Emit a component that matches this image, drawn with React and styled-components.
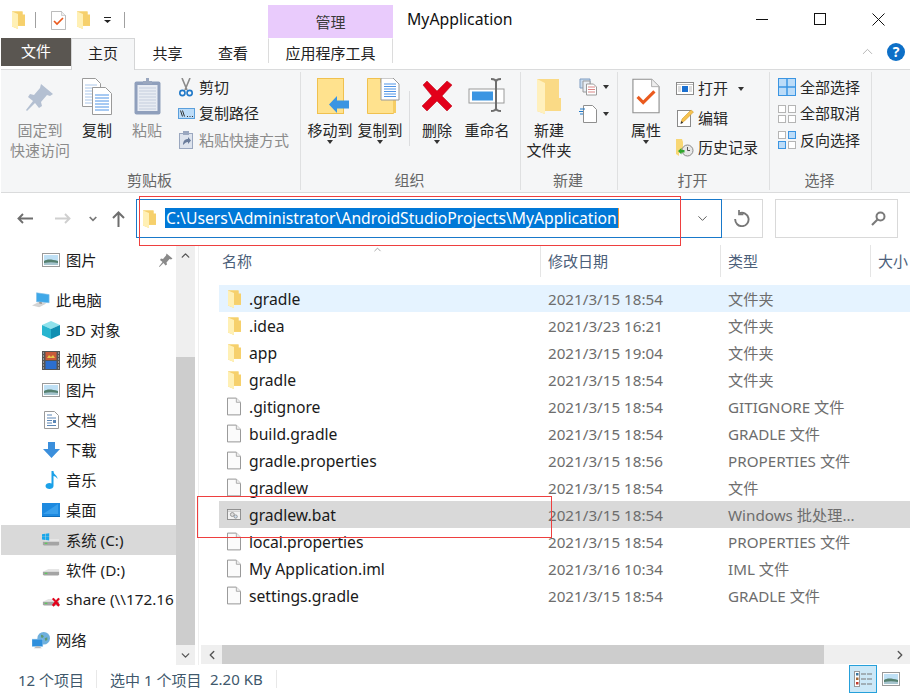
import React from "react";
import styled, { createGlobalStyle } from "styled-components";
import { ChevronDown, ChevronUp, ChevronLeft, ChevronRight } from "lucide-react";

const GlobalStyle = createGlobalStyle`
  html, body {
    margin: 0;
    padding: 0;
    background: #fff;
  }
  body {
    font-family: "Noto Sans", "Noto Sans CJK SC", sans-serif;
    font-size: 15px;
    color: #1c1c1c;
  }
  * {
    box-sizing: border-box;
  }
`;

const Window = styled.div`
  position: relative;
  width: 910px;
  height: 695px;
  padding-left: 1px;
  overflow: hidden;
  background: #fff;
  display: flex;
  flex-direction: column;
`;

const RedBox = styled.div`
  position: absolute;
  left: ${(p) => p.$x}px;
  top: ${(p) => p.$y}px;
  width: ${(p) => p.$w}px;
  height: ${(p) => p.$h}px;
  border: 1px solid #ee3f3f;
  pointer-events: none;
`;

/* title bar */
const TitleBar = styled.div`
  height: 38px;
  display: flex;
  flex: none;
`;

const QuickBar = styled.div`
  width: 267px;
  display: flex;
  align-items: center;
  padding: 2px 0 0 11px;
`;

const QuickSep = styled.div`
  width: 1px;
  height: 16px;
  background: #a0a0a0;
  margin: 0 ${(p) => p.$right || 0}px 0 ${(p) => p.$left || 0}px;
`;

const QuickIcon = styled.div`
  display: flex;
  margin-right: ${(p) => p.$right || 0}px;
`;

const ContextTab = styled.div`
  width: 125px;
  margin-top: 5px;
  background: #e9cbfc;
  color: #3a3a3a;
  text-align: center;
  line-height: 34px;
`;

const Title = styled.div`
  flex: 1;
  padding-left: 14px;
  line-height: 38px;
  font-size: 15.8px;
  color: #111;
`;

const WinButtons = styled.div`
  display: flex;
  padding-right: 3px;
`;

const WinButton = styled.div`
  width: 58px;
  display: flex;
  align-items: center;
  justify-content: center;
  color: #111;
`;

const MinGlyph = styled.div`
  width: 12px;
  height: 1px;
  background: #111;
`;

const MaxGlyph = styled.div`
  width: 12px;
  height: 12px;
  border: 1px solid #111;
`;

/* tabs */
const TabRow = styled.div`
  height: 32px;
  flex: none;
  display: flex;
  border-bottom: 1px solid #dadbdc;
`;

const FileTab = styled.div`
  width: 70px;
  height: 28px;
  background: #5a5651;
  color: #fff;
  text-align: center;
  line-height: 27px;
`;

const Tab = styled.div`
  width: ${(p) => p.$w}px;
  height: ${(p) => (p.$active ? 32 : 31)}px;
  text-align: center;
  line-height: 29px;
  color: #222;
  background: ${(p) => (p.$active ? "#f5f6f7" : "transparent")};
  border: 1px solid ${(p) => (p.$active ? "#d4d5d6" : "transparent")};
  border-bottom: none;
  position: relative;
`;

const ToolTab = styled(Tab)`
  margin-left: 2px;
  border-color: #dcdcdc;
  border-top-color: transparent;
  height: 25px;
`;

const TabRight = styled.div`
  flex: 1;
  display: flex;
  justify-content: flex-end;
  align-items: center;
  gap: 11px;
  padding: 0 5px 4px 0;
`;

const HelpIcon = styled.div`
  width: 18px;
  height: 18px;
  border-radius: 50%;
  background: #0d6fc7;
  color: #fff;
  font-size: 14px;
  font-weight: 700;
  line-height: 18px;
  text-align: center;
`;

/* ribbon */
const Ribbon = styled.div`
  height: 123px;
  flex: none;
  display: flex;
  padding-top: 2px;
  background: #f5f6f7;
  border-bottom: 1px solid #dadbdc;
`;

const Group = styled.div`
  width: ${(p) => p.$w}px;
  height: 118px;
  display: flex;
  flex-direction: column;
  border-right: 1px solid #dfe0e1;
`;

const GroupBody = styled.div`
  flex: 1;
  display: flex;
  align-items: flex-start;
  padding: 2px 0 0 ${(p) => p.$pad || 0}px;
`;

const GroupLabel = styled.div`
  height: 24px;
  padding-right: 2px;
  text-align: center;
  font-size: 15px;
  line-height: 28px;
  color: #666;
`;

const BigButton = styled.div`
  width: ${(p) => p.$w}px;
  padding: 4px 0 0 ${(p) => p.$pl || 0}px;
  display: flex;
  flex-direction: column;
  align-items: center;
  color: ${(p) => (p.$off ? "#8b8b8b" : "#262626")};
  font-size: 15px;
  line-height: 20px;
  white-space: nowrap;
  text-align: center;
`;

const BigIcon = styled.div`
  height: 42px;
  padding: ${(p) => p.$top || 0}px 0 0 ${(p) => p.$shift || 0}px;
  display: flex;
  align-items: flex-start;
  justify-content: center;
`;

const Caret = styled.div`
  width: 0;
  height: 0;
  border-left: 3.5px solid transparent;
  border-right: 3.5px solid transparent;
  border-top: 4px solid #333;
  margin: ${(p) => p.$m || "0"};
  flex: none;
`;

const RibbonSep = styled.div`
  width: 1px;
  height: 55px;
  margin: 17px 0 0 4px;
  background: #dcdddf;
`;

const SmallColumn = styled.div`
  display: flex;
  flex-direction: column;
  padding: ${(p) => p.$top || 0}px 0 0 ${(p) => p.$left || 0}px;
`;

const SmallRow = styled.div`
  height: ${(p) => p.$h || 26.5}px;
  display: flex;
  align-items: center;
  gap: 4px;
  font-size: 15px;
  white-space: nowrap;
  color: ${(p) => (p.$off ? "#8b8b8b" : "#262626")};
`;

const SmallIcon = styled.div`
  width: 18px;
  display: flex;
  justify-content: center;
`;

const SmallText = styled.span`
  margin-bottom: 2px;
`;

/* navigation */
const NavBar = styled.div`
  height: 52px;
  flex: none;
  display: flex;
  align-items: center;
  padding-bottom: 1px;
`;

const NavArrows = styled.div`
  width: 135px;
  display: flex;
  align-items: center;
  padding-left: 16px;
`;

const NavArrow = styled.div`
  display: flex;
  width: 16px;
  flex: none;
  justify-content: center;
  margin-left: ${(p) => p.$gap || 0}px;
`;

const AddressBox = styled.div`
  width: 586px;
  height: 39px;
  display: flex;
  align-items: center;
  border: 1px solid #1979ca;
  padding-left: 6px;
`;

const PathText = styled.div`
  margin: 0 0 2px 9px;
  padding: 0 1px;
  background: #0078d7;
  color: #fff;
  line-height: 20px;
  font-size: 15.7px;
  white-space: nowrap;
  border-right: 1px solid #f39a3c;
`;

const AddressChevron = styled.div`
  margin-left: auto;
  margin-right: 11px;
  display: flex;
  color: #444;
`;

const RefreshBox = styled.div`
  width: 41px;
  height: 39px;
  display: flex;
  align-items: center;
  justify-content: center;
  border: 1px solid #d9d9d9;
  border-left: none;
`;

const SearchBox = styled.div`
  width: 123px;
  height: 39px;
  margin-left: 12px;
  display: flex;
  align-items: center;
  justify-content: flex-end;
  padding-right: 11px;
  border: 1px solid #d9d9d9;
`;

/* main */
const Main = styled.div`
  flex: 1;
  display: flex;
  min-height: 0;
`;

const Sidebar = styled.div`
  width: 175px;
  flex: none;
  overflow: hidden;
`;

const TreeRow = styled.div`
  height: 30px;
  display: flex;
  align-items: center;
  gap: 6px;
  padding-left: ${(p) => p.$pad}px;
  margin-top: ${(p) => p.$gap || 0}px;
  background: ${(p) => (p.$selected ? "#d9d9d9" : "transparent")};
  font-size: 15.3px;
  color: #1c1c1c;
  white-space: nowrap;
  position: relative;
`;

const TreeIcon = styled.div`
  width: 18px;
  display: flex;
  justify-content: center;
  flex: none;
`;

const TreeText = styled.span`
  margin-bottom: 2px;
`;

const PinMark = styled.div`
  position: absolute;
  right: 3px;
  top: 8px;
  display: flex;
`;

const VScroll = styled.div`
  width: 19px;
  flex: none;
  display: flex;
  flex-direction: column;
  background: #efefef;
  color: #555;
`;

const ScrollButton = styled.div`
  height: 20px;
  display: flex;
  align-items: center;
  justify-content: center;
  flex: none;
`;

const VTrack = styled.div`
  flex: 1;
  padding: 92px 0 0;
  display: flex;
`;

const VThumb = styled.div`
  width: 100%;
  height: 100%;
  background: #cdcdcd;
`;

const Content = styled.div`
  flex: 1;
  min-width: 0;
  display: flex;
  flex-direction: column;
  margin-left: 3px;
  border-left: 1px solid #efefef;
`;

const HeaderRow = styled.div`
  height: 35px;
  flex: none;
  display: flex;
  padding-left: 15px;
`;

const HeaderCell = styled.div`
  width: ${(p) => p.$w}px;
  flex: none;
  height: 32px;
  padding-left: ${(p) => p.$pad || 7}px;
  line-height: 32px;
  font-size: 15px;
  color: #4c607a;
  white-space: nowrap;
  border-right: 1px solid #e5e5e5;
  position: relative;
`;

const SortMark = styled.div`
  position: absolute;
  left: 158px;
  top: -1px;
  display: flex;
  color: #777;
`;

const FileList = styled.div`
  flex: 1;
  padding: 5px 0 0 20px;
`;

const FileRow = styled.div`
  height: 27px;
  display: grid;
  grid-template-columns: 329px 180px 1fr;
  align-items: center;
  background: ${(p) => (p.$bg ? p.$bg : "transparent")};
  white-space: nowrap;
`;

const NameCell = styled.div`
  display: flex;
  align-items: center;
  gap: 8px;
  padding-left: 8px;
  font-size: 15.7px;
  color: #1a1a1a;
`;

const NameIcon = styled.div`
  width: 14px;
  display: flex;
  justify-content: center;
`;

const MetaCell = styled.div`
  font-size: 15.2px;
  color: #6d6d6d;
`;

const TypeCell = styled(MetaCell)`
  margin-bottom: 2px;
`;

const HScroll = styled.div`
  height: 19px;
  flex: none;
  margin: 0 0 1px 2px;
  display: flex;
  background: #efefef;
  color: #555;
`;

const HThumb = styled.div`
  width: 602px;
  background: #cdcdcd;
`;

const HButton = styled.div`
  width: ${(p) => p.$w}px;
  display: flex;
  align-items: center;
  justify-content: ${(p) => (p.$end ? "flex-end" : "center")};
  padding-right: ${(p) => (p.$end ? 3 : 0)}px;
`;

const StatusBar = styled.div`
  height: 30px;
  flex: none;
  display: flex;
  align-items: center;
  font-size: 15px;
  color: #40586c;
  padding: 0 0 2px 17px;
`;

const StatusSep = styled.div`
  width: 1px;
  height: 18px;
  background: #e8e8e8;
  margin: 0 ${(p) => p.$r || 0}px 0 ${(p) => p.$l || 0}px;
`;

const StatusText = styled.div`
  width: ${(p) => p.$w}px;
  white-space: nowrap;
`;

const ViewButtons = styled.div`
  margin-left: auto;
  padding-right: 10px;
  display: flex;
  align-items: center;
  gap: 5px;
`;

const ViewButton = styled.div`
  width: 28px;
  height: 28px;
  display: flex;
  align-items: center;
  justify-content: center;
  background: ${(p) => (p.$on ? "#cce8f7" : "transparent")};
  border: ${(p) => (p.$on ? "1px solid #26a0da" : "none")};
`;

/* drawings */
const Folder = ({ w = 13, h = 18 }) => (
  <svg width={w} height={h} viewBox="0 0 13 18">
    <path d="M0 0.5h10.5V4H13v11H6v3L0 15.500z" fill="#f8d775" />
    <path d="M0 .5h10.5v3h2.500v11H6z" fill="#f6d06c" />
    <path d="M0 .5L6 3v15L0 15.500z" fill="#fff0b5" />
  </svg>
);

const FileIcon = () => (
  <svg width="15" height="19" viewBox="0 0 15 19">
    <path d="M.5.5h9.500l4.500 4.500v13.500H.5z" fill="#fbfbfb" stroke="#8e8e8e" />
    <path d="M10 .5V5h4.500" fill="#eee" stroke="#aaa" />
  </svg>
);

const BatIcon = () => (
  <svg width="17" height="13" viewBox="0 0 17 13">
    <rect x=".5" y=".5" width="16" height="12" fill="#f2f2f2" stroke="#7f7f7f" />
    <path d="M1 2.500h15" stroke="#bbb" />
    <circle cx="6.500" cy="6.500" r="2.400" fill="#ddd" stroke="#8a8a8a" />
    <circle cx="10.500" cy="9" r="2" fill="#cfe0ef" stroke="#8a8a8a" />
  </svg>
);

const CheckDoc = ({ w = 15, h = 19, stroke = 1 }) => (
  <svg width={w} height={h} viewBox="0 0 30 38">
    <path d="M1 1h20l8 8v28H1z" fill="#fff" stroke="#8f8f8f" strokeWidth={stroke * 1.2} />
    <path d="M21 1v8h8" fill="#eee" stroke="#aaa" strokeWidth={stroke} />
    <path d="M6 20l6 6 12-12" fill="none" stroke="#ea5a1e" strokeWidth="3.400" />
  </svg>
);

const Pin = () => (
  <svg width="28" height="28" viewBox="0 0 28 28">
    <path d="M15 1l12 10-3 2-3-1-6 7 1 4-3 2-4-5-8 8-1-1 7-9-5-4 2-3 4 1 6-7z" fill="#b4c0d2" />
  </svg>
);

const SmallPin = () => (
  <svg width="14" height="14" viewBox="0 0 28 28">
    <path d="M15 1l12 10-3 2-3-1-6 7 1 4-3 2-4-5-8 8-1-1 7-9-5-4 2-3 4 1 6-7z" fill="#8a8a8a" />
  </svg>
);

const DocLines = ({ x, y, w, n, c = "#4f94e6", gap = 3 }) =>
  Array.from({ length: n }, (_, i) => (
    <path key={i} d={`M${x} ${y + i * gap}h${w}`} stroke={c} strokeWidth="1" />
  ));

const CopyIcon = () => (
  <svg width="30" height="37" viewBox="0 0 30 37">
    <path d="M.5.5h13l5 5v23H.5z" fill="#fff" stroke="#9a9a9a" />
    <DocLines x={3} y={7} w={12} n={7} c="#a9c6ea" />
    <path d="M10.500 9.500h13l6 6v21h-19z" fill="#fff" stroke="#9a9a9a" />
    <DocLines x={13} y={17} w={14} n={6} />
  </svg>
);

const PasteIcon = () => (
  <svg width="27" height="37" viewBox="0 0 27 37">
    <rect x=".5" y="3.500" width="26" height="33" rx="2" fill="#8f9fbc" />
    <rect x="3.500" y="7" width="20" height="26" fill="#e8ecf3" />
    <DocLines x={5} y={10} w={17} n={8} c="#c4cddd" />
    <path d="M9 6V3h3V0h3v3h3v3z" fill="#9aa7bf" />
  </svg>
);

const Scissors = () => (
  <svg width="14" height="19" viewBox="0 0 14 19">
    <path d="M3 0l5 12M11 0L6 12" stroke="#8b8b8b" strokeWidth="1.600" fill="none" />
    <circle cx="3.400" cy="15" r="2.600" fill="none" stroke="#1f78c8" strokeWidth="1.600" />
    <circle cx="10.600" cy="15" r="2.600" fill="none" stroke="#1f78c8" strokeWidth="1.600" />
  </svg>
);

const PathIcon = () => (
  <svg width="17" height="11" viewBox="0 0 17 11">
    <rect x=".5" y=".5" width="16" height="10" fill="#bcdcf8" stroke="#5a9fdc" />
    <path d="M2.500 2.500l2 6M4.500 2.500l2 6" stroke="#333" fill="none" />
    <path d="M9 8.500h1M11.500 8.500h1M14 8.500h1" stroke="#333" />
  </svg>
);

const ShortcutIcon = () => (
  <svg width="14" height="18" viewBox="0 0 14 18">
    <rect x=".5" y="2.500" width="13" height="15" fill="#dde3ed" stroke="#9aa7bf" />
    <rect x="4" y="0" width="6" height="4" fill="#9aa7bf" />
    <path d="M4 14c0-4 2-6 5-6V6l3 3.500-3 3.500v-2c-2 0-3 1-5 3z" fill="#6a7c9b" />
  </svg>
);

const MoveIcon = () => (
  <svg width="32" height="37" viewBox="0 0 32 37">
    <rect x=".5" y=".5" width="26" height="35" fill="#ffe28e" stroke="#f0c14f" />
    <path d="M12 26.500l8-8.500v4.500h12v8H20V35z" fill="#3b95e2" />
  </svg>
);

const CopyToIcon = () => (
  <svg width="33" height="37" viewBox="0 0 33 37">
    <path d="M.5.5h13v4h13v31H.5z" fill="#ffe28e" stroke="#f0c14f" />
    <path d="M26 19h3v16h-3z" fill="#f6cd64" />
    <path d="M14 0h12l6 6v16H14z" fill="#fff" stroke="#9a9a9a" />
    <DocLines x={17} y={6} w={12} n={6} gap={2.500} />
  </svg>
);

const DeleteIcon = () => (
  <svg width="32" height="32" viewBox="0 0 32 32">
    <path d="M2 5l4-4 10 10L26 1l5 4-10 11 10 10-5 5-10-10L6 31l-5-5 10-10z" fill="#e2001a" stroke="#b80012" strokeWidth=".5" />
  </svg>
);

const RenameIcon = () => (
  <svg width="38" height="34" viewBox="0 0 38 34">
    <rect x="1" y="11" width="35" height="14" fill="#fff" stroke="#9a9a9a" />
    <rect x="4" y="13.500" width="21" height="9" fill="#3b95e2" />
    <path d="M28 2v30M23 1c3 0 5 1 5 3 0-2 2-3 5-3M23 33c3 0 5-1 5-3 0 2 2 3 5 3" fill="none" stroke="#6e6e6e" strokeWidth="2" />
  </svg>
);

const NewFolderIcon = () => (
  <svg width="24" height="36" viewBox="0 0 24 36">
    <path d="M0 1h22v19h2v13H8v3L0 33z" fill="#fada86" />
    <path d="M0 1l8 4v31l-8-3z" fill="#fff0bd" />
  </svg>
);

const NewItemIcon = () => (
  <svg width="18" height="18" viewBox="0 0 18 18">
    <path d="M1 1h10v9H1z" fill="#c9dcf0" stroke="#7f9cc0" />
    <path d="M4 3h7v11H4z" fill="#e8eef5" stroke="#9a9a9a" />
    <path d="M7.500 6h7l3 3v8h-10z" fill="#fff" stroke="#9a9a9a" />
    <DocLines x={9} y={9} w={7} n={3} c="#d98686" gap={2.500} />
  </svg>
);

const NewDocIcon = () => (
  <svg width="18" height="18" viewBox="0 0 18 18">
    <path d="M4.500.5h9l4 4v13h-13z" fill="#fff" stroke="#8f8f8f" />
    <path d="M1 4h5M0 6.500h4M1 9h3" stroke="#1f78c8" />
  </svg>
);

const OpenIcon = () => (
  <svg width="18" height="13" viewBox="0 0 18 13">
    <rect x=".5" y=".5" width="17" height="12" fill="#fff" stroke="#8a8a8a" />
    <path d="M1 2.500h16" stroke="#bbb" />
    <rect x="6" y="4" width="6" height="6" fill="#1a6fd0" />
    <path d="M2 5h3M2 7h3M2 9h3M13 5h3M13 7h3M13 9h3" stroke="#bbb" />
  </svg>
);

const EditIcon = () => (
  <svg width="17" height="18" viewBox="0 0 17 18">
    <rect x=".5" y="1.500" width="13" height="16" fill="#fff" stroke="#8a8a8a" />
    <path d="M4 14l1-4 9-9 2.500 2-9 9z" fill="#f6c350" stroke="#c88e1d" strokeWidth=".5" />
    <path d="M3.500 15l.8-3 2 1.700z" fill="#333" />
  </svg>
);

const HistoryIcon = () => (
  <svg width="18" height="18" viewBox="0 0 18 18">
    <path d="M0 0h6l1 3v11H3v3l-3-2z" fill="#f8d775" />
    <circle cx="11.500" cy="11.500" r="5.500" fill="#e7e7e7" stroke="#888" />
    <path d="M11.500 8v3.500H14" stroke="#555" fill="none" />
    <path d="M2 12l3.500-3v2h3v2.500h-3v2z" fill="#2ea62e" />
  </svg>
);

const SelectGrid = ({ fill, stroke }) => (
  <svg width="18" height="18" viewBox="0 0 18 18">
    {[0, 10].flatMap((y) =>
      [0, 10].map((x) => (
        <rect key={`${x}-${y}`} x={x + 0.5} y={y + 0.5} width="7" height="7" fill={fill(x, y)} stroke={stroke(x, y)} />
      ))
    )}
  </svg>
);

const SelectAll = () => (
  <svg width="18" height="18" viewBox="0 0 18 18">
    <rect x=".5" y=".5" width="17" height="17" fill="#bcdcf8" stroke="#3b95e2" />
    <path d="M9 0v18M0 9h18" stroke="#3b95e2" strokeWidth="1.500" />
  </svg>
);

const blue = (x, y) => (x === 10 && y === 0) || (x === 0 && y === 10);

const PictureIcon = ({ w = 18, h = 14 }) => (
  <svg width={w} height={h} viewBox="0 0 18 14">
    <rect x=".5" y=".5" width="17" height="13" fill="#fff" stroke="#9a9a9a" />
    <rect x="2" y="2" width="14" height="10" fill="#bfe0f5" />
    <path d="M2 8c3-2 7-2 14 0v4H2z" fill="#55806f" />
    <path d="M2 10c5-1 9-1 14 0v2H2z" fill="#a7c5cf" />
  </svg>
);

const ComputerIcon = () => (
  <svg width="20" height="18" viewBox="0 0 20 18">
    <path d="M5 1l14 2v9L5 11z" fill="#3fa8e8" stroke="#7fc0e8" strokeWidth=".7" />
    <path d="M0 15l8-4 8 2-8 4z" fill="#d4d4d4" />
    <path d="M8 11l3 .4v2L8 13z" fill="#999" />
  </svg>
);

const CubeIcon = () => (
  <svg width="18" height="18" viewBox="0 0 18 18">
    <path d="M9 0l9 4-9 4-9-4z" fill="#8fe2ec" />
    <path d="M0 4l9 4v10l-9-4z" fill="#28b5cf" />
    <path d="M18 4L9 8v10l9-4z" fill="#0f8fb2" />
  </svg>
);

const FilmIcon = () => (
  <svg width="18" height="19" viewBox="0 0 18 19">
    <rect width="18" height="19" fill="#555" />
    <rect x="3.500" y="1" width="11" height="8" fill="#c85a3a" />
    <rect x="3.500" y="10" width="11" height="8" fill="#2c6fd0" />
    <path d="M5 7l2-3 2 2 2-2 2 3z" fill="#e6c64a" />
    <path d="M1 2h1M1 5h1M1 8h1M1 11h1M1 14h1M1 17h1M16 2h1M16 5h1M16 8h1M16 11h1M16 14h1M16 17h1" stroke="#ddd" />
  </svg>
);

const DocIcon = () => (
  <svg width="15" height="18" viewBox="0 0 15 18">
    <path d="M.5.5h10l4 4v13H.5z" fill="#fff" stroke="#9a9a9a" />
    <path d="M3 4h5M3 7h9M3 9.500h5M3 12h5M3 14.500h9" stroke="#5c86b5" />
    <rect x="9" y="9" width="3" height="3" fill="#5c86b5" />
  </svg>
);

const DownloadIcon = () => (
  <svg width="17" height="16" viewBox="0 0 17 16">
    <path d="M5 0h7v7h5l-8.500 9L0 7h5z" fill="#3b8fdc" />
  </svg>
);

const NoteIcon = () => (
  <svg width="13" height="18" viewBox="0 0 13 18">
    <path d="M6.500 0h2c0 4 4 4 4 8-1-2-3-3-4-3v10c0 2-2 3-4 3s-4-1-4-3 2-3 4-3c.7 0 1.500.2 2 .5z" fill="#1ba1e8" />
  </svg>
);

const DesktopIcon = () => (
  <svg width="18" height="14" viewBox="0 0 18 14">
    <rect width="18" height="13" fill="#1e8ae0" />
    <path d="M1 11L16 1v10z" fill="#3aa0ec" />
    <path d="M0 13h18v1H0z" fill="#106cb8" />
  </svg>
);

const DriveIcon = ({ win, cross }) => (
  <svg width="20" height="16" viewBox="0 0 20 16">
    <path d="M1 10l6-3h12v3z" fill="#e5e5e5" />
    <path d="M1 10h18v3l-1 1H2l-1-1z" fill="#a4a4a4" />
    <rect x="3" y="11" width="3" height="1.500" fill="#5ecb5e" />
    {win && <path d="M0 1.500l3.500-.5v3H0zM4 1l4-.5v3.500H4zM0 4.500h3.500V8L0 7.500zM4 4.500h4V8.500L4 8z" fill="#19a7ea" />}
    {cross && <path d="M11 7l2-1.500 2.500 3L18 5.500 20 7l-3 3 3 3.500-2 2-2.500-3-2.500 3-2-2 3-3.500z" fill="#e2001a" />}
  </svg>
);

const NetworkIcon = () => (
  <svg width="20" height="19" viewBox="0 0 20 19">
    <circle cx="13" cy="7" r="7" fill="#6fb0dd" />
    <path d="M10 3c2 0 3 1 3 2s-2 2-3 1zM14 7l3-1 0 3-2 1z" fill="#5f9a72" />
    <rect x="0" y="8" width="12" height="8" fill="#2f8fdc" stroke="#8dc4ec" strokeWidth=".6" />
    <path d="M2 18l3-2h3l3 2z" fill="#bbb" />
  </svg>
);

const SearchGlass = () => (
  <svg width="15" height="15" viewBox="0 0 15 15">
    <circle cx="9.500" cy="5.500" r="4" fill="none" stroke="#7a7a7a" strokeWidth="2" />
    <path d="M6.500 8.500L1 14" stroke="#7a7a7a" strokeWidth="2.200" />
  </svg>
);

const DetailsView = () => (
  <svg width="18" height="16" viewBox="0 0 18 16">
    <rect x=".5" y=".5" width="5" height="15" fill="#fff" stroke="#999" />
    <rect x="2" y="2" width="2.500" height="2.500" fill="#39759e" />
    <rect x="2" y="6.500" width="2.500" height="2.500" fill="#a66a36" />
    <rect x="2" y="11" width="2.500" height="2.500" fill="#c23a2c" />
    <path d="M7 3h5M13 3h5M7 8h5M13 8h5M7 13h5M13 13h5" stroke="#777" />
  </svg>
);

const CloseGlyph = () => (
  <svg width="13" height="13" viewBox="0 0 13 13">
    <path d="M.5.5l12 12M12.500.5l-12 12" stroke="#111" strokeWidth="1" />
  </svg>
);

const BackArrow = () => (
  <svg width="16" height="11" viewBox="0 0 16 11">
    <path d="M16 5.500H2M6 1L1.500 5.500 6 10" fill="none" stroke="#6e6e6e" strokeWidth="1.900" />
  </svg>
);

const ForwardArrow = () => (
  <svg width="16" height="11" viewBox="0 0 16 11">
    <path d="M0 5.500h14M10 1l4.500 4.500L10 10" fill="none" stroke="#cfcfcf" strokeWidth="1.900" />
  </svg>
);

const SmallChevron = () => (
  <svg width="8" height="6" viewBox="0 0 8 6">
    <path d="M.7 1L4 4.300 7.300 1" fill="none" stroke="#777" strokeWidth="1.700" />
  </svg>
);

const UpArrow = () => (
  <svg width="13" height="16" viewBox="0 0 13 16">
    <path d="M6.500 16V2M1 7l5.500-5.500L12 7" fill="none" stroke="#6e6e6e" strokeWidth="2" />
  </svg>
);

const RefreshGlyph = () => (
  <svg width="16" height="17" viewBox="0 0 16 17">
    <path d="M5.500 3.200A6.700 6.700 0 1 1 1.200 9" fill="none" stroke="#777" strokeWidth="1.900" />
    <path d="M5 0v4.400h4.400" fill="none" stroke="#777" strokeWidth="1.700" />
  </svg>
);

const sideRows = [
  { icon: <PictureIcon />, label: "图片", pad: 41, pin: true },
  { icon: <ComputerIcon />, label: "此电脑", pad: 31, gap: 10 },
  { icon: <CubeIcon />, label: "3D 对象", pad: 41 },
  { icon: <FilmIcon />, label: "视频", pad: 41 },
  { icon: <PictureIcon />, label: "图片", pad: 41 },
  { icon: <DocIcon />, label: "文档", pad: 41 },
  { icon: <DownloadIcon />, label: "下载", pad: 41 },
  { icon: <NoteIcon />, label: "音乐", pad: 41 },
  { icon: <DesktopIcon />, label: "桌面", pad: 41 },
  { icon: <DriveIcon win />, label: "系统 (C:)", pad: 41, selected: true },
  { icon: <DriveIcon />, label: "软件 (D:)", pad: 41 },
  { icon: <DriveIcon cross />, label: "share (\\\\172.16", pad: 41 },
  { icon: <NetworkIcon />, label: "网络", pad: 31, gap: 10 },
];

const files = [
  { name: ".gradle", date: "2021/3/15 18:54", type: "文件夹", kind: "folder", bg: "#e5f3ff" },
  { name: ".idea", date: "2021/3/23 16:21", type: "文件夹", kind: "folder" },
  { name: "app", date: "2021/3/15 19:04", type: "文件夹", kind: "folder" },
  { name: "gradle", date: "2021/3/15 18:54", type: "文件夹", kind: "folder" },
  { name: ".gitignore", date: "2021/3/15 18:54", type: "GITIGNORE 文件" },
  { name: "build.gradle", date: "2021/3/15 18:54", type: "GRADLE 文件" },
  { name: "gradle.properties", date: "2021/3/15 18:56", type: "PROPERTIES 文件" },
  { name: "gradlew", date: "2021/3/15 18:54", type: "文件" },
  { name: "gradlew.bat", date: "2021/3/15 18:54", type: "Windows 批处理...", kind: "bat", bg: "#d9d9d9" },
  { name: "local.properties", date: "2021/3/15 18:54", type: "PROPERTIES 文件" },
  { name: "My Application.iml", date: "2021/3/16 10:34", type: "IML 文件" },
  { name: "settings.gradle", date: "2021/3/15 18:54", type: "GRADLE 文件" },
];

function fileIcon(kind) {
  if (kind === "folder") return <Folder w={13} h={18} />;
  if (kind === "bat") return <BatIcon />;
  return <FileIcon />;
}

export default function App() {
  return (
    <>
      <GlobalStyle />
      <Window>
        <TitleBar>
          <QuickBar>
            <QuickIcon><Folder /></QuickIcon>
            <QuickSep $left={10} $right={15} />
            <QuickIcon $right={11}><CheckDoc /></QuickIcon>
            <QuickIcon $right={14}><Folder /></QuickIcon>
            <QuickIcon $right={13}>
              <svg width="7" height="6" viewBox="0 0 7 6">
                <path d="M0 0h7v1H0zM0 3h7L3.500 6z" fill="#222" />
              </svg>
            </QuickIcon>
            <QuickSep />
          </QuickBar>
          <ContextTab>管理</ContextTab>
          <Title>MyApplication</Title>
          <WinButtons>
            <WinButton><MinGlyph /></WinButton>
            <WinButton><MaxGlyph /></WinButton>
            <WinButton><CloseGlyph /></WinButton>
          </WinButtons>
        </TitleBar>

        <TabRow>
          <FileTab>文件</FileTab>
          <Tab $w={64} $active>主页</Tab>
          <Tab $w={65}>共享</Tab>
          <Tab $w={66}>查看</Tab>
          <ToolTab $w={125}>应用程序工具</ToolTab>
          <TabRight>
            <ChevronUp size={17} strokeWidth={1} color="#9a9a9a" />
            <HelpIcon>?</HelpIcon>
          </TabRight>
        </TabRow>

        <Ribbon>
          <Group $w={300}>
            <GroupBody>
              <BigButton $w={78} $off>
                <BigIcon $top={5}><Pin /></BigIcon>
                <span>固定到</span>
                <span>快速访问</span>
              </BigButton>
              <BigButton $w={36}>
                <BigIcon><CopyIcon /></BigIcon>
                <span>复制</span>
              </BigButton>
              <BigButton $w={62} $pl={2} $off>
                <BigIcon><PasteIcon /></BigIcon>
                <span>粘贴</span>
              </BigButton>
              <SmallColumn>
                <SmallRow><SmallIcon><Scissors /></SmallIcon><SmallText>剪切</SmallText></SmallRow>
                <SmallRow><SmallIcon><PathIcon /></SmallIcon><SmallText>复制路径</SmallText></SmallRow>
                <SmallRow $off><SmallIcon><ShortcutIcon /></SmallIcon><SmallText>粘贴快捷方式</SmallText></SmallRow>
              </SmallColumn>
            </GroupBody>
            <GroupLabel>剪贴板</GroupLabel>
          </Group>

          <Group $w={220}>
            <GroupBody $pad={4}>
              <BigButton $w={50}>
                <BigIcon $shift={6}><MoveIcon /></BigIcon>
                <span>移动到</span>
                <Caret />
              </BigButton>
              <BigButton $w={50}>
                <BigIcon $shift={6}><CopyToIcon /></BigIcon>
                <span>复制到</span>
                <Caret />
              </BigButton>
              <RibbonSep />
              <BigButton $w={54}>
                <BigIcon $top={2}><DeleteIcon /></BigIcon>
                <span>删除</span>
                <Caret />
              </BigButton>
              <BigButton $w={46}>
                <BigIcon><RenameIcon /></BigIcon>
                <span>重命名</span>
              </BigButton>
            </GroupBody>
            <GroupLabel>组织</GroupLabel>
          </Group>

          <Group $w={97}>
            <GroupBody>
              <BigButton $w={56}>
                <BigIcon><NewFolderIcon /></BigIcon>
                <span>新建</span>
                <span>文件夹</span>
              </BigButton>
              <SmallColumn $left={2}>
                <SmallRow><NewItemIcon /><Caret $m="0 0 0 2px" /></SmallRow>
                <SmallRow><NewDocIcon /><Caret $m="0 0 0 2px" /></SmallRow>
              </SmallColumn>
            </GroupBody>
            <GroupLabel>新建</GroupLabel>
          </Group>

          <Group $w={152}>
            <GroupBody>
              <BigButton $w={56}>
                <BigIcon><CheckDoc w={28} h={36} /></BigIcon>
                <span>属性</span>
                <Caret />
              </BigButton>
              <SmallColumn $left={2}>
                <SmallRow $h={29.5}>
                  <SmallIcon><OpenIcon /></SmallIcon><SmallText>打开</SmallText><Caret $m="0 0 0 6px" />
                </SmallRow>
                <SmallRow $h={29.5}><SmallIcon><EditIcon /></SmallIcon><SmallText>编辑</SmallText></SmallRow>
                <SmallRow $h={29.5}><SmallIcon><HistoryIcon /></SmallIcon><SmallText>历史记录</SmallText></SmallRow>
              </SmallColumn>
            </GroupBody>
            <GroupLabel>打开</GroupLabel>
          </Group>

          <Group $w={102}>
            <GroupBody $pad={8}>
              <SmallColumn>
                <SmallRow><SmallIcon><SelectAll /></SmallIcon><SmallText>全部选择</SmallText></SmallRow>
                <SmallRow>
                  <SmallIcon>
                    <SelectGrid fill={() => "#fff"} stroke={() => "#b5b5b5"} />
                  </SmallIcon>
                  <SmallText>全部取消</SmallText>
                </SmallRow>
                <SmallRow>
                  <SmallIcon>
                    <SelectGrid
                      fill={(x, y) => (blue(x, y) ? "#bcdcf8" : "#fff")}
                      stroke={(x, y) => (blue(x, y) ? "#3b95e2" : "#b5b5b5")}
                    />
                  </SmallIcon>
                  <SmallText>反向选择</SmallText>
                </SmallRow>
              </SmallColumn>
            </GroupBody>
            <GroupLabel>选择</GroupLabel>
          </Group>
        </Ribbon>

        <NavBar>
          <NavArrows>
            <NavArrow><BackArrow /></NavArrow>
            <NavArrow $gap={22}><ForwardArrow /></NavArrow>
            <NavArrow $gap={14}><SmallChevron /></NavArrow>
            <NavArrow $gap={9}><UpArrow /></NavArrow>
          </NavArrows>
          <AddressBox>
            <Folder />
            <PathText>C:\Users\Administrator\AndroidStudioProjects\MyApplication</PathText>
            <AddressChevron><ChevronDown size={15} strokeWidth={1.4} /></AddressChevron>
          </AddressBox>
          <RefreshBox><RefreshGlyph /></RefreshBox>
          <SearchBox><SearchGlass /></SearchBox>
        </NavBar>

        <Main>
          <Sidebar>
            {sideRows.map((row, i) => (
              <TreeRow key={i} $pad={row.pad} $gap={row.gap} $selected={row.selected}>
                <TreeIcon>{row.icon}</TreeIcon>
                <TreeText>{row.label}</TreeText>
                {row.pin && <PinMark><SmallPin /></PinMark>}
              </TreeRow>
            ))}
          </Sidebar>
          <VScroll>
            <ScrollButton><ChevronUp size={13} strokeWidth={2.4} /></ScrollButton>
            <VTrack><VThumb /></VTrack>
            <ScrollButton><ChevronDown size={13} strokeWidth={2.4} /></ScrollButton>
          </VScroll>
          <Content>
            <HeaderRow>
              <HeaderCell $w={327} $pad={8}>
                <SortMark><ChevronUp size={11} strokeWidth={1.4} /></SortMark>
                名称
              </HeaderCell>
              <HeaderCell $w={180}>修改日期</HeaderCell>
              <HeaderCell $w={150}>类型</HeaderCell>
              <HeaderCell $w={60}>大小</HeaderCell>
            </HeaderRow>
            <FileList>
              {files.map((f) => (
                <FileRow key={f.name} $bg={f.bg}>
                  <NameCell>
                    <NameIcon>{fileIcon(f.kind)}</NameIcon>
                    {f.name}
                  </NameCell>
                  <MetaCell>{f.date}</MetaCell>
                  <TypeCell>{f.type}</TypeCell>
                </FileRow>
              ))}
            </FileList>
            <HScroll>
              <HButton $w={21}><ChevronLeft size={14} strokeWidth={2.4} /></HButton>
              <HThumb />
              <HButton $w={86} $end><ChevronRight size={14} strokeWidth={2.4} /></HButton>
            </HScroll>
          </Content>
        </Main>

        <StatusBar>
          <StatusText $w={78}>12 个项目</StatusText>
          <StatusSep $r={13} />
          <StatusText $w={100}>选中 1 个项目</StatusText>
          <StatusText $w={66}>2.20 KB</StatusText>
          <StatusSep />
          <ViewButtons>
            <ViewButton $on><DetailsView /></ViewButton>
            <PictureIcon w={18} h={14} />
          </ViewButtons>
        </StatusBar>

        <RedBox $x={139} $y={196} $w={542} $h={50} />
        <RedBox $x={197} $y={496} $w={355} $h={42} />
      </Window>
    </>
  );
}
